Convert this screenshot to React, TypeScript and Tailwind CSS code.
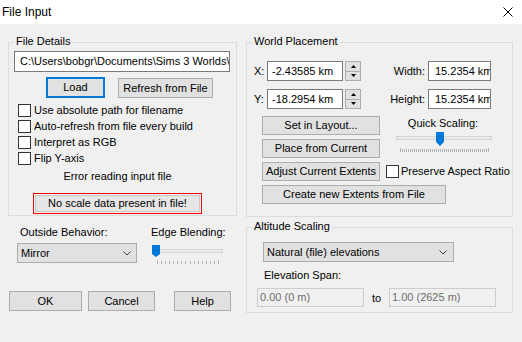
import React from "react";

function Group({ label, className, children }: { label: string; className: string; children?: React.ReactNode }) {
  return (
    <div className={"relative border border-[#dcdcdc] " + className}>
      <span className="absolute -top-[8px] left-[5px] bg-[#f0f0f0] px-[2px] leading-[13px] whitespace-nowrap">{label}</span>
      {children}
    </div>
  );
}

function Box() {
  return <span className="block w-[13px] h-[13px] border border-[#333333] bg-white shrink-0" />;
}

function Btn({ children, className }: { children: React.ReactNode; className: string }) {
  return (
    <div className={"flex items-center justify-center bg-[#e1e1e1] border border-[#adadad] whitespace-nowrap " + className}>
      {children}
    </div>
  );
}

function Chevron() {
  return (
    <svg width="8" height="5" viewBox="0 0 8 5" className="shrink-0">
      <polyline points="0.5,0.5 4,4 7.5,0.5" fill="none" stroke="#444444" strokeWidth="1" />
    </svg>
  );
}

function Spinner() {
  return (
    <div className="ml-[2px] w-[16px] h-[20px] flex flex-col border border-[#adadad] bg-[#e1e1e1]">
      <div className="flex-1 flex items-center justify-center border-b border-[#adadad]">
        <svg width="5" height="3" viewBox="0 0 5 3"><polygon points="2.5,0 5,3 0,3" fill="#000" /></svg>
      </div>
      <div className="flex-1 flex items-center justify-center">
        <svg width="5" height="3" viewBox="0 0 5 3"><polygon points="0,0 5,0 2.5,3" fill="#000" /></svg>
      </div>
    </div>
  );
}

function EdgeSlider() {
  const ticks = Array.from({ length: 16 }, (_, i) => Math.round(6 + i * (61 / 15)));
  return (
    <svg width="72" height="19" viewBox="0 0 72 19" className="mt-[6px]">
      <rect x="1.5" y="4.5" width="70" height="3" fill="#e7eaea" stroke="#d6d6d6" />
      {ticks.map((x, i) => (
        <rect key={i} x={x} y={i === 0 || i === ticks.length - 1 ? 15 : 16} width="1" height={i === 0 || i === ticks.length - 1 ? 4 : 3} fill="#b4b4b4" />
      ))}
      <path d="M1 0 H9 V9 L5 12 L1 9 Z" fill="#0078d7" />
    </svg>
  );
}

function QuickSlider() {
  const ticks = Array.from({ length: 45 }, (_, i) => 14 + i * 2);
  return (
    <svg width="110" height="23" viewBox="0 0 110 23">
      <rect x="10.5" y="6.5" width="95" height="3" fill="#e7eaea" stroke="#d6d6d6" />
      {ticks.map((x, i) => (
        <rect key={i} x={x} y={i === 0 || i === ticks.length - 1 ? 18 : 19} width="1" height={i === 0 || i === ticks.length - 1 ? 4 : 3} fill="#b4b4b4" />
      ))}
      <path d="M50 2 H58 V12 L54 16 L50 12 Z" fill="#0078d7" />
    </svg>
  );
}

export default function App() {
  return (
    <div className="w-[522px] h-[342px] bg-[#f0f0f0] text-[11px] leading-[13px] text-black font-['Liberation_Sans',Arial,sans-serif] overflow-hidden">
      <div className="h-[24px] bg-white flex items-center justify-between">
        <span className="pl-[2px] text-[12px] leading-[14px]">File Input</span>
        <svg width="10" height="10" viewBox="0 0 10 10" className="mr-[9px]">
          <path d="M0.5 0.5 L9.5 9.5 M9.5 0.5 L0.5 9.5" stroke="#000" strokeWidth="1" />
        </svg>
      </div>

      <div className="flex pt-[18px] pl-[8px] gap-[9px]">
        {/* Left column */}
        <div className="w-[229px] flex flex-col">
          <Group label="File Details" className="h-[174px] pt-[8px] pl-[5px]">
            <div className="w-[216px] h-[21px] border border-[#7a7a7a] bg-white flex items-center pl-[5px] overflow-hidden whitespace-nowrap">
              {"C:\\Users\\bobgr\\Documents\\Sims 3 Worlds\\File.png"}
            </div>
            <div className="flex mt-[5px] ml-[32px] gap-[13px] items-start">
              <div className="w-[59px] h-[21px] border-2 border-[#0078d7] bg-[#e1e1e1] flex items-center justify-center">Load</div>
              <Btn className="mt-[1px] w-[95px] h-[20px]">Refresh from File</Btn>
            </div>
            <div className="flex flex-col gap-[3px] mt-[6px] ml-[4px]">
              {["Use absolute path for filename", "Auto-refresh from file every build", "Interpret as RGB", "Flip Y-axis"].map((t) => (
                <div key={t} className="h-[13px] flex items-center gap-[3px] whitespace-nowrap">
                  <Box />
                  <span>{t}</span>
                </div>
              ))}
            </div>
            <div className="w-[207px] flex flex-col items-center">
              <div className="mt-[5px]">Error reading input file</div>
              <div className="mt-[10px] w-[169px] h-[21px] border border-[#ff0000] p-[1px]">
                <div className="h-full border border-[#c8c8c8] bg-[#e6e6e6] flex items-center justify-center">No scale data present in file!</div>
              </div>
            </div>
          </Group>

          <div className="flex items-start mt-[10px]">
            <div className="ml-[9px] w-[120px] flex flex-col">
              <span className="ml-[3px]">Outside Behavior:</span>
              <div className="mt-[4px] h-[20px] border border-[#adadad] bg-[#e1e1e1] flex items-center justify-between pl-[3px] pr-[5px]">
                <span>Mirror</span>
                <Chevron />
              </div>
            </div>
            <div className="ml-[14px] flex flex-col">
              <span>Edge Blending:</span>
              <EdgeSlider />
            </div>
          </div>

          <div className="flex mt-[27px] ml-[1px]">
            <Btn className="w-[73px] h-[20px]">OK</Btn>
            <Btn className="ml-[6px] w-[67px] h-[20px]">Cancel</Btn>
            <Btn className="ml-[19px] w-[57px] h-[20px]">Help</Btn>
          </div>
        </div>

        {/* Right column */}
        <div className="w-[267px] flex flex-col">
          <Group label="World Placement" className="h-[175px] pt-[18px]">
            <div className="pl-[7px] flex flex-col gap-[8px]">
              {[
                ["X:", "-2.43585 km", "Width:"],
                ["Y:", "-18.2954 km", "Height:"],
              ].map(([a, v, b]) => (
                <div key={a} className="flex items-center h-[20px]">
                  <span className="w-[13px] shrink-0">{a}</span>
                  <div className="w-[76px] h-[20px] border border-[#7a7a7a] bg-white flex items-center pl-[4px] whitespace-nowrap">{v}</div>
                  <Spinner />
                  <span className="w-[64px] text-right">{b}</span>
                  <div className="ml-[3px] w-[63px] h-[20px] border border-[#7a7a7a] bg-white flex items-center pl-[6px] whitespace-nowrap overflow-hidden">15.2354 km</div>
                </div>
              ))}
            </div>
            <div className="mt-[7px] pl-[15px] grid grid-cols-[118px_110px] gap-x-[6px] gap-y-[4px]">
              <Btn className="h-[19px]">Set in Layout...</Btn>
              <div className="row-span-2 flex flex-col">
                <span className="mt-[1px] w-[114px] text-center">Quick Scaling:</span>
                <QuickSlider />
              </div>
              <Btn className="h-[19px]">Place from Current</Btn>
              <Btn className="h-[19px]">Adjust Current Extents</Btn>
              <div className="flex items-center gap-[2px] whitespace-nowrap">
                <Box />
                <span>Preserve Aspect Ratio</span>
              </div>
              <Btn className="col-span-2 w-[184px] h-[19px]">Create new Extents from File</Btn>
            </div>
          </Group>

          <Group label="Altitude Scaling" className="mt-[10px] h-[86px] pt-[14px] pl-[10px]">
            <div className="ml-[6px] w-[191px] h-[20px] border border-[#adadad] bg-[#e1e1e1] flex items-center justify-between pl-[3px] pr-[6px]">
              <span>Natural (file) elevations</span>
              <Chevron />
            </div>
            <div className="mt-[7px] ml-[7px]">Elevation Span:</div>
            <div className="mt-[6px] flex items-center">
              <div className="w-[107px] h-[19px] border border-[#cccccc] flex items-center pl-[2px] text-[#6d6d6d]">0.00 (0 m)</div>
              <span className="w-[25px] pl-[8px] pt-[2px]">to</span>
              <div className="w-[107px] h-[19px] border border-[#cccccc] flex items-center pl-[2px] text-[#6d6d6d]">1.00 (2625 m)</div>
            </div>
          </Group>
        </div>
      </div>
    </div>
  );
}
